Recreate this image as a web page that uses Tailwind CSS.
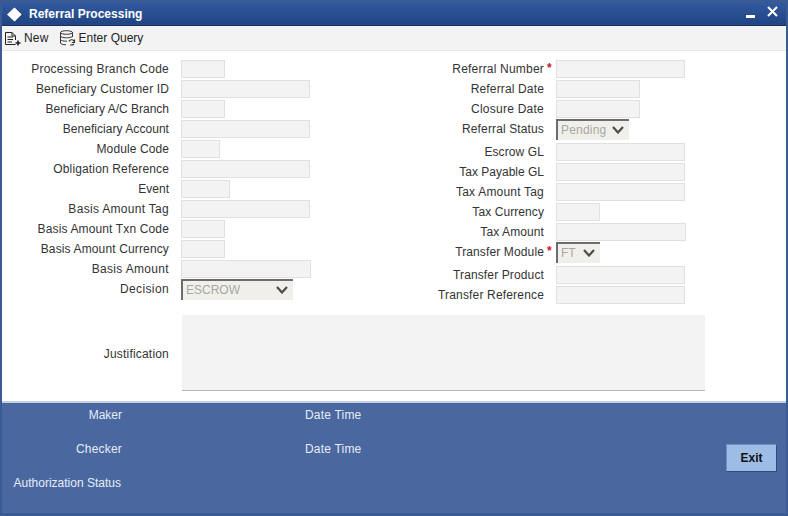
<!DOCTYPE html>
<html lang="en">
<head>
  <meta charset="UTF-8" />
  <title>Referral Processing</title>
  <script src="https://cdn.jsdelivr.net/npm/@tailwindcss/browser@4"></script>
</head>
<body class="w-[788px] h-[516px] overflow-hidden bg-[#3a5a94] font-['Liberation_Sans',Arial,sans-serif] text-xs text-[#303030]">
  <div class="flex flex-col h-[516px] pl-[2px] pr-[2px] pt-[3px] pb-[3px]">

    <!-- title bar -->
    <div class="h-[23px] shrink-0 flex items-center bg-gradient-to-b from-[#31599f] to-[#214482] border-b border-[#16305f] text-white">
      <svg class="ml-[5px] mr-[5px]" width="17" height="15" viewBox="0 0 17 15"><path d="M7.5 0.5L15 7.5L7.5 14.5L0 7.5Z" fill="#fff"/><path d="M8.5 0.5L16 7.5L8.5 14.5L15 7.5Z" fill="#16305f"/></svg>
      <span class="font-bold">Referral Processing</span>
      <svg class="ml-auto mt-[4px]" width="9" height="3" viewBox="0 0 9 3"><rect width="9" height="3" fill="#fff"/></svg>
      <svg class="ml-[12px] mr-[8px] mb-[5px]" width="11" height="11" viewBox="0 0 11 11"><path d="M1 1L10 10M10 1L1 10" stroke="#fff" stroke-width="2"/></svg>
    </div>

    <!-- toolbar -->
    <div class="h-[25px] shrink-0 flex items-center bg-[#f3f3f3] border-b border-[#e8e8e8] text-[#222]">
      <svg class="ml-[2px] mr-[2px]" width="18" height="15" viewBox="0 0 18 15" fill="none" stroke="#222" stroke-width="1"><path d="M1.5 1.5H8L11.5 5V9M11.5 13.5H1.5V1.5M3.5 6H9M3.5 8.5H9M3.5 11H8M8 1.5V5H11.5"/><path d="M14 9.5V14.5M11.5 12H16.5" stroke-width="1.6"/></svg>
      <span class="tracking-[0.2px]">New</span>
      <svg class="ml-[10px] mr-[3px]" width="17" height="16" viewBox="0 0 17 16" fill="none" stroke="#333" stroke-width="1"><ellipse cx="7.5" cy="2.5" rx="6" ry="1.8"/><path d="M1.5 2.5V13C1.5 14 4 14.8 7 14.8M13.5 2.5V7M1.5 6C1.5 7 4 7.8 7.5 7.8S13.5 7 13.5 6M1.5 9.5C1.5 10.5 4 11.2 8 11.2"/><path d="M10 11.5C10.5 9.5 13.5 9 15 10.8L15.5 12.5M15.5 9.5V12.5H12.8M11 14.8C12.5 15.3 14 15 15 14" stroke-width="1.1"/></svg>
      <span>Enter Query</span>
    </div>

    <!-- form -->
    <div class="h-[350px] shrink-0 bg-white pt-[9px] text-[#333]">
      <div class="flex h-[255px]">
        <div class="w-[375px] shrink-0 flex flex-col">
          <div class="h-[20px] flex items-start"><label class="w-[167px] text-right pt-[1px] tracking-[0.23px]">Processing Branch Code</label><input disabled class="ml-[12px] w-[44px] h-[18px] bg-[#f3f3f3] border border-[#e0e0e0]" /></div>
          <div class="h-[20px] flex items-start"><label class="w-[167px] text-right pt-[1px] tracking-[0.13px]">Beneficiary Customer ID</label><input disabled class="ml-[12px] w-[129px] h-[18px] bg-[#f3f3f3] border border-[#e0e0e0]" /></div>
          <div class="h-[20px] flex items-start"><label class="w-[167px] text-right pt-[1px]">Beneficiary A/C Branch</label><input disabled class="ml-[12px] w-[44px] h-[18px] bg-[#f3f3f3] border border-[#e0e0e0]" /></div>
          <div class="h-[20px] flex items-start"><label class="w-[167px] text-right pt-[1px] tracking-[0.05px]">Beneficiary Account</label><input disabled class="ml-[12px] w-[129px] h-[18px] bg-[#f3f3f3] border border-[#e0e0e0]" /></div>
          <div class="h-[20px] flex items-start"><label class="w-[167px] text-right pt-[1px] tracking-[0.1px]">Module Code</label><input disabled class="ml-[12px] w-[39px] h-[18px] bg-[#f3f3f3] border border-[#e0e0e0]" /></div>
          <div class="h-[20px] flex items-start"><label class="w-[167px] text-right pt-[1px] tracking-[0.15px]">Obligation Reference</label><input disabled class="ml-[12px] w-[129px] h-[18px] bg-[#f3f3f3] border border-[#e0e0e0]" /></div>
          <div class="h-[20px] flex items-start"><label class="w-[167px] text-right pt-[1px]">Event</label><input disabled class="ml-[12px] w-[49px] h-[18px] bg-[#f3f3f3] border border-[#e0e0e0]" /></div>
          <div class="h-[20px] flex items-start"><label class="w-[167px] text-right pt-[1px] tracking-[0.3px]">Basis Amount Tag</label><input disabled class="ml-[12px] w-[129px] h-[18px] bg-[#f3f3f3] border border-[#e0e0e0]" /></div>
          <div class="h-[20px] flex items-start"><label class="w-[167px] text-right pt-[1px] tracking-[0.14px]">Basis Amount Txn Code</label><input disabled class="ml-[12px] w-[44px] h-[18px] bg-[#f3f3f3] border border-[#e0e0e0]" /></div>
          <div class="h-[20px] flex items-start"><label class="w-[167px] text-right pt-[1px] tracking-[0.14px]">Basis Amount Currency</label><input disabled class="ml-[12px] w-[44px] h-[18px] bg-[#f3f3f3] border border-[#e0e0e0]" /></div>
          <div class="h-[20px] flex items-start"><label class="w-[167px] text-right pt-[1px] tracking-[0.33px]">Basis Amount</label><input disabled class="ml-[12px] w-[130px] h-[18px] bg-[#f3f3f3] border border-[#e0e0e0]" /></div>
          <div class="h-[20px] flex items-start"><label class="w-[167px] text-right pt-[1px] tracking-[0.37px]">Decision</label>
            <div class="ml-[12px] -mt-[1px] w-[112px] h-[21px] flex items-center justify-between bg-[#f1efe9] border-t-2 border-l-2 border-[#6c6c6c] pb-[1px] pl-[3px] pr-[5px] text-[#a8a8a8]">
              <span>ESCROW</span>
              <svg width="12" height="8" viewBox="0 0 12 8" fill="none" stroke="#4d4d4d" stroke-width="2.2"><path d="M1 1L6 6.5L11 1"/></svg>
            </div>
          </div>
        </div>

        <div class="flex flex-col">
          <div class="h-[20px] flex items-start"><label class="w-[167px] text-right pt-[1px] tracking-[0.2px]">Referral Number</label><b class="w-[12px] pl-[3px] text-[#c8161d]">*</b><input disabled class="w-[129px] h-[18px] bg-[#f3f3f3] border border-[#e0e0e0]" /></div>
          <div class="h-[20px] flex items-start"><label class="w-[167px] text-right pt-[1px] tracking-[0.15px]">Referral Date</label><input disabled class="ml-[12px] w-[84px] h-[18px] bg-[#f3f3f3] border border-[#e0e0e0]" /></div>
          <div class="h-[20px] flex items-start"><label class="w-[167px] text-right pt-[1px] tracking-[0.25px]">Closure Date</label><input disabled class="ml-[12px] w-[84px] h-[18px] bg-[#f3f3f3] border border-[#e0e0e0]" /></div>
          <div class="h-[23px] flex items-start"><label class="w-[167px] text-right pt-[1px] tracking-[0.13px]">Referral Status</label>
            <div class="ml-[12px] -mt-[1px] w-[73px] h-[21px] flex items-center justify-between bg-[#f1efe9] border-t-2 border-l-2 border-[#6c6c6c] pb-[1px] pl-[3px] pr-[5px] text-[#a8a8a8] tracking-[0.2px]">
              <span>Pending</span>
              <svg width="12" height="8" viewBox="0 0 12 8" fill="none" stroke="#4d4d4d" stroke-width="2.2"><path d="M1 1L6 6.5L11 1"/></svg>
            </div>
          </div>
          <div class="h-[20px] flex items-start"><label class="w-[167px] text-right pt-[1px] tracking-[0.1px]">Escrow GL</label><input disabled class="ml-[12px] w-[129px] h-[18px] bg-[#f3f3f3] border border-[#e0e0e0]" /></div>
          <div class="h-[20px] flex items-start"><label class="w-[167px] text-right pt-[1px]">Tax Payable GL</label><input disabled class="ml-[12px] w-[129px] h-[18px] bg-[#f3f3f3] border border-[#e0e0e0]" /></div>
          <div class="h-[20px] flex items-start"><label class="w-[167px] text-right pt-[1px] tracking-[0.2px]">Tax Amount Tag</label><input disabled class="ml-[12px] w-[129px] h-[18px] bg-[#f3f3f3] border border-[#e0e0e0]" /></div>
          <div class="h-[20px] flex items-start"><label class="w-[167px] text-right pt-[1px] tracking-[0.08px]">Tax Currency</label><input disabled class="ml-[12px] w-[44px] h-[18px] bg-[#f3f3f3] border border-[#e0e0e0]" /></div>
          <div class="h-[20px] flex items-start"><label class="w-[167px] text-right pt-[1px] tracking-[0.1px]">Tax Amount</label><input disabled class="ml-[12px] w-[130px] h-[18px] bg-[#f3f3f3] border border-[#e0e0e0]" /></div>
          <div class="h-[23px] flex items-start"><label class="w-[167px] text-right pt-[1px] tracking-[0.13px]">Transfer Module</label><b class="w-[12px] pl-[3px] text-[#c8161d]">*</b>
            <div class="-mt-[1px] w-[44px] h-[21px] flex items-center justify-between bg-[#f1efe9] border-t-2 border-l-2 border-[#6c6c6c] pb-[1px] pl-[3px] pr-[5px] text-[#a8a8a8]">
              <span>FT</span>
              <svg width="12" height="8" viewBox="0 0 12 8" fill="none" stroke="#4d4d4d" stroke-width="2.2"><path d="M1 1L6 6.5L11 1"/></svg>
            </div>
          </div>
          <div class="h-[20px] flex items-start"><label class="w-[167px] text-right pt-[1px] tracking-[0.13px]">Transfer Product</label><input disabled class="ml-[12px] w-[129px] h-[18px] bg-[#f3f3f3] border border-[#e0e0e0]" /></div>
          <div class="h-[20px] flex items-start"><label class="w-[167px] text-right pt-[1px] tracking-[0.17px]">Transfer Reference</label><input disabled class="ml-[12px] w-[129px] h-[18px] bg-[#f3f3f3] border border-[#e0e0e0]" /></div>
        </div>
      </div>

      <div class="flex items-center">
        <label class="w-[167px] text-right pt-[1px] tracking-[0.2px]">Justification</label>
        <div class="ml-[13px] w-[523px] h-[76px] bg-[#f3f3f3] border-b border-[#b8b8b8]"></div>
      </div>
    </div>

    <!-- footer -->
    <div class="flex-1 flex bg-[#4a689f] border-t-2 border-[#c5cfe0] text-[#e6edf8]">
      <div class="pt-[3px]">
        <div class="h-[34px] flex items-start"><span class="w-[120px] text-right pt-[1px]">Maker</span><span class="ml-[183px] pt-[1px] tracking-[0.2px]">Date Time</span></div>
        <div class="h-[34px] flex items-start"><span class="w-[120px] text-right pt-[1px] tracking-[0.2px]">Checker</span><span class="ml-[183px] pt-[1px] tracking-[0.2px]">Date Time</span></div>
        <div class="h-[34px] flex items-start"><span class="w-[119px] text-right pt-[1px]">Authorization Status</span></div>
      </div>
      <button class="ml-auto mr-[9px] mt-[41px] w-[51px] h-[28px] bg-[#9dbde6] border border-[#6f8fbe] border-r-[#2f4a7c] border-b-[#2f4a7c] text-[#111] font-bold">Exit</button>
    </div>
  </div>
</body>
</html>
